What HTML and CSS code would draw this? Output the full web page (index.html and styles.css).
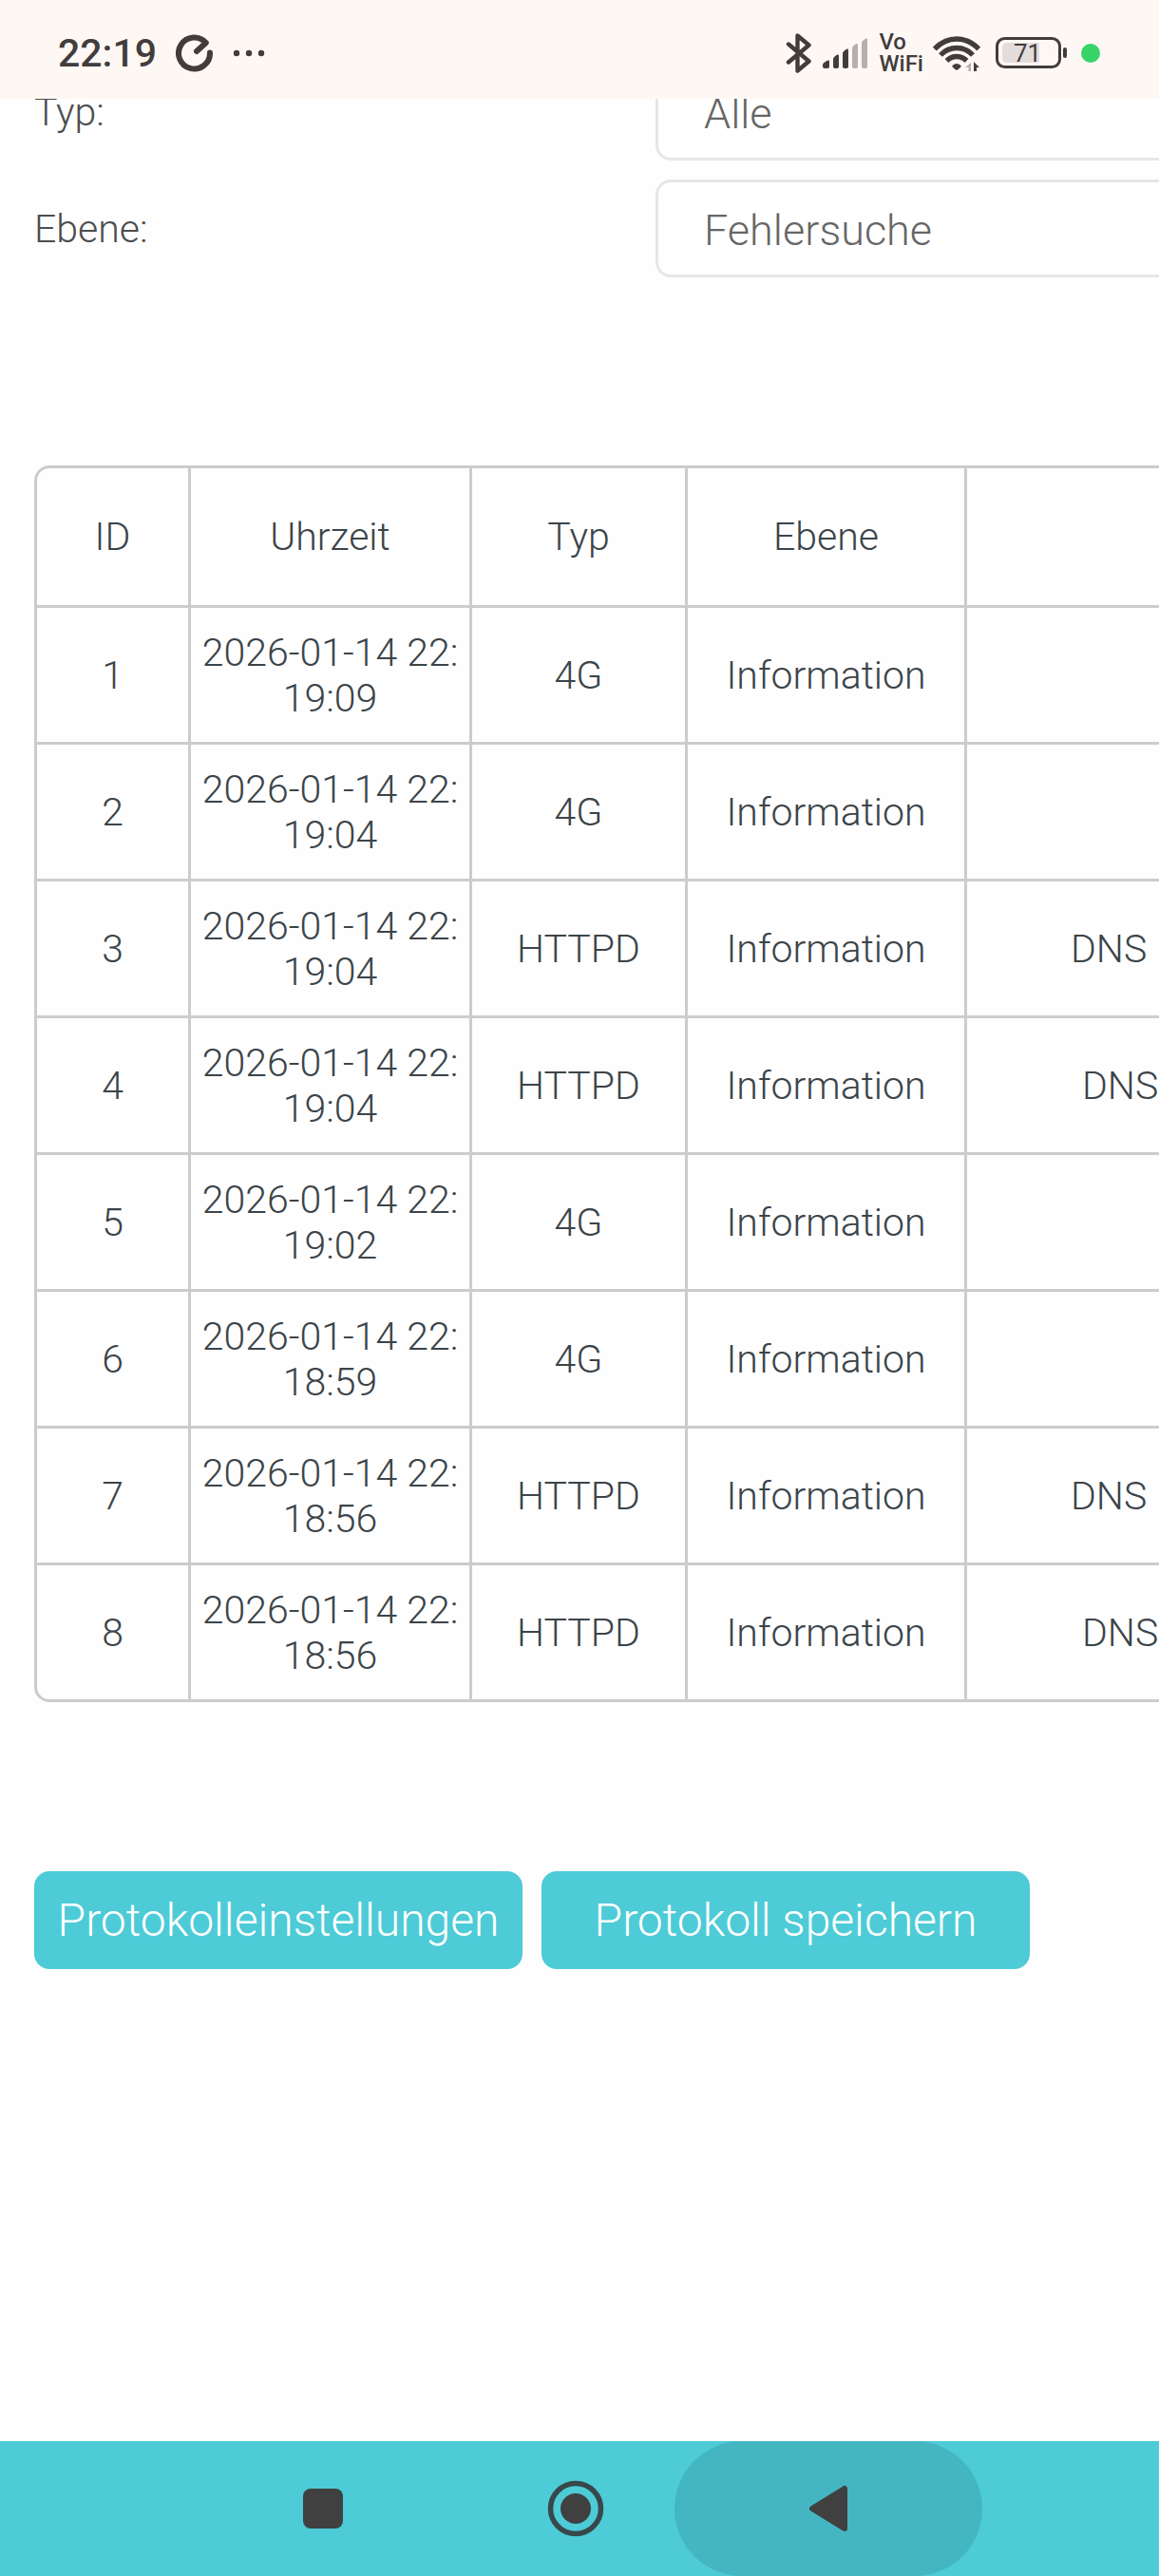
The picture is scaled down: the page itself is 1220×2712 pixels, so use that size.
FILE: index.html
```html
<!DOCTYPE html>
<html lang="de">
<head>
  <meta charset="UTF-8">
  <meta name="viewport" content="width=device-width, initial-scale=1.0">
  <title>Systemprotokoll</title>
  <link rel="stylesheet" href="styles.css">
</head>
<body>
  <!-- Status bar -->
  <header class="status-bar">
    <div class="status-left">
      <span class="clock">22:19</span>
      <svg width="40" height="40" viewBox="0 0 40 40" fill="none" stroke="#423d3c" stroke-width="6" stroke-linecap="round" stroke-linejoin="round" aria-hidden="true">
        <path d="M36 19.5A16.5 16.5 0 1 1 31.8 9L22 18"/>
      </svg>
      <svg width="34" height="8" viewBox="0 0 34 8" fill="#423d3c" aria-hidden="true">
        <circle cx="4" cy="4" r="3.2"/>
        <circle cx="17" cy="4" r="3.2"/>
        <circle cx="30" cy="4" r="3.2"/>
      </svg>
    </div>
    <div class="status-right">
      <svg width="28" height="42" viewBox="0 0 28 42" fill="none" stroke="#423d3c" stroke-width="4.4" stroke-linecap="round" stroke-linejoin="round" aria-hidden="true">
        <path d="M3 11.5L24.5 29.5L12.5 39.5V2.5L24.5 12.5L3 30.5"/>
      </svg>
      <svg width="50" height="32" viewBox="0 0 50 32" aria-hidden="true">
        <g fill="#423d3c">
          <path d="M1 28q0-2 5.500-4.500q1.500-.5 1.500 1v5.500q0 2-2 2h-3q-2 0-2-2z"/>
          <path d="M12 22q0-2 4.500-4.500q1.500-.5 1.500 1v11.500q0 2-2 2h-2q-2 0-2-2z"/>
          <path d="M22 16q0-2 4.500-4.500q1.500-.5 1.500 1v17.500q0 2-2 2h-2q-2 0-2-2z"/>
        </g>
        <g fill="#b5afad">
          <path d="M32 10.500q0-2 4.500-4.500q1.500-.5 1.500 1v23q0 2-2 2h-2q-2 0-2-2z"/>
          <path d="M42 5q0-2 4.500-4.500q1.500-.5 1.500 1v28.500q0 2-2 2h-2q-2 0-2-2z"/>
        </g>
      </svg>
      <span class="vowifi">Vo<br>WiFi</span>
      <svg width="50" height="38" viewBox="0 0 50 38" aria-hidden="true">
        <g fill="none" stroke="#423d3c" stroke-width="5.4">
          <path d="M1.800 14.500Q12 4 25 4T48.200 14.500"/>
          <path d="M8 21Q15 13.500 25 13.500T42 21"/>
          <path d="M14.500 27Q19 22.500 25 22.500T35.500 27"/>
        </g>
        <path fill="#423d3c" d="M20.500 32Q25 28 29.500 32Q30 33 29 34L26 36.500Q25 37.200 24 36.500L21 34Q20 33 20.500 32z"/>
        <path fill="#b5afad" d="M40 29V38H37.500V34H34z"/>
        <path fill="#423d3c" d="M43 38V28L49 34H46V38z"/>
      </svg>
      <span class="battery">
        <svg width="76" height="34" viewBox="0 0 76 34" aria-hidden="true">
          <rect x="1.500" y="1.500" width="66" height="30" rx="8" fill="none" stroke="#423d3c" stroke-width="3"/>
          <path fill="#e3dedc" d="M12 6H46V27H12q-5 0-5-5V11q0-5 5-5z"/>
          <rect x="71" y="11" width="4" height="11" rx="2" fill="#423d3c"/>
        </svg>
        <span class="battery-level">71</span>
      </span>
      <span class="privacy-dot"></span>
    </div>
  </header>

  <!-- Log page, scrolled under the status bar -->
  <main class="content">
    <form class="filters">
      <label for="type">Typ:</label>
      <select id="type" name="type">
        <option>Alle</option>
      </select>
      <label for="level">Ebene:</label>
      <select id="level" name="level">
        <option>Fehlersuche</option>
      </select>
    </form>

    <div class="table-box">
      <table class="log">
        <colgroup>
          <col class="col-id">
          <col class="col-time">
          <col class="col-type">
          <col class="col-level">
          <col>
        </colgroup>
        <thead>
          <tr><th>ID</th><th>Uhrzeit</th><th>Typ</th><th>Ebene</th><th></th></tr>
        </thead>
        <tbody>
          <tr><td>1</td><td>2026-01-14 22:<br>19:09</td><td>4G</td><td>Information</td><td></td></tr>
          <tr><td>2</td><td>2026-01-14 22:<br>19:04</td><td>4G</td><td>Information</td><td></td></tr>
          <tr><td>3</td><td>2026-01-14 22:<br>19:04</td><td>HTTPD</td><td>Information</td><td class="message">DNS</td></tr>
          <tr><td>4</td><td>2026-01-14 22:<br>19:04</td><td>HTTPD</td><td>Information</td><td class="message short">DNS</td></tr>
          <tr><td>5</td><td>2026-01-14 22:<br>19:02</td><td>4G</td><td>Information</td><td></td></tr>
          <tr><td>6</td><td>2026-01-14 22:<br>18:59</td><td>4G</td><td>Information</td><td></td></tr>
          <tr><td>7</td><td>2026-01-14 22:<br>18:56</td><td>HTTPD</td><td>Information</td><td class="message">DNS</td></tr>
          <tr><td>8</td><td>2026-01-14 22:<br>18:56</td><td>HTTPD</td><td>Information</td><td class="message short">DNS</td></tr>
        </tbody>
      </table>
    </div>

    <div class="actions">
      <button type="button">Protokolleinstellungen</button>
      <button type="button">Protokoll speichern</button>
    </div>
  </main>

  <!-- Navigation bar -->
  <nav class="nav-bar">
    <button type="button" aria-label="Übersicht">
      <svg width="42" height="42" viewBox="0 0 42 42"><rect width="42" height="42" rx="8" fill="#404040"/></svg>
    </button>
    <button type="button" aria-label="Startseite">
      <svg width="60" height="60" viewBox="0 0 60 60">
        <circle cx="30" cy="30" r="26.500" fill="none" stroke="#38484a" stroke-width="5.500"/>
        <circle cx="30" cy="30" r="16" fill="#404040"/>
      </svg>
    </button>
    <button type="button" class="pressed" aria-label="Zurück">
      <svg width="40" height="50" viewBox="0 0 40 50"><path d="M3 25L37 4V46z" fill="#404040" stroke="#404040" stroke-width="6" stroke-linejoin="round"/></svg>
    </button>
  </nav>
</body>
</html>
```

FILE: styles.css
```css
/* General Styles */
* {
  box-sizing: border-box;
}

body {
  margin: 0;
  min-height: 100vh;
  display: flex;
  flex-direction: column;
  overflow-x: hidden;
  font-family: Roboto, sans-serif;
  font-size: 41px;
  font-weight: 300;
  background-color: #fefefe;
  color: #3b4449;
}

svg {
  display: block;
}

button {
  border: none;
  font-family: inherit;
  font-weight: 300;
  cursor: pointer;
}

/* Status bar */
.status-bar {
  position: relative;
  z-index: 1;
  display: flex;
  justify-content: space-between;
  height: 104px;
  padding: 8px 62px 0 61px;
  background-color: #fef8f5;
  color: #423d3c;
}

.status-left,
.status-right {
  display: flex;
  align-items: center;
}

.status-left {
  gap: 20px;
}

.status-right {
  gap: 10px;
}

.clock {
  font-weight: 500;
}

.vowifi {
  font-size: 24px;
  font-weight: 500;
  line-height: 23px;
}

.battery {
  position: relative;
  margin: 0 4px 0 6px;
}

.battery-level {
  position: absolute;
  top: 2px;
  left: 19px;
  font-size: 26px;
  font-weight: 400;
  line-height: 30px;
}

.privacy-dot {
  width: 20px;
  height: 20px;
  border-radius: 50%;
  background-color: #37d467;
}

/* Content */
.content {
  flex: 1;
  margin-top: -38px;
  padding-left: 36px;
}

.filters {
  display: grid;
  grid-template-columns: 654px 1fr;
  row-gap: 20px;
  align-items: center;
  color: #4d4d4d;
}

.filters select {
  appearance: none;
  width: 100%;
  height: 103px;
  padding: 4px 48px 0;
  border: 3px solid #e6e6e6;
  border-right: none;
  border-radius: 16px 0 0 16px;
  background-color: #fff;
  color: #666;
  font-family: inherit;
  font-size: 45px;
  font-weight: 300;
}

/* Log table */
.table-box {
  margin-top: 198px;
  border: 3px solid #ccc;
  border-right: none;
  border-radius: 16px 0 0 16px;
  overflow: hidden;
}

.log {
  width: 100%;
  table-layout: fixed;
  border-collapse: separate;
  border-spacing: 0;
  line-height: 48px;
  text-align: center;
}

.col-id {
  width: 159px;
}

.col-time {
  width: 296px;
}

.col-type {
  width: 227px;
}

.col-level {
  width: 294px;
}

.log th,
.log td {
  height: 144px;
  padding: 0;
  font-weight: 300;
  white-space: nowrap;
}

.log td {
  border-top: 3px solid #ccc;
}

.log th + th,
.log td + td {
  border-left: 3px solid #ccc;
}

.log .message {
  padding-left: 109px;
  text-align: left;
}

.log .short {
  padding-left: 121px;
}

/* Buttons */
.actions {
  display: flex;
  gap: 20px;
  margin-top: 178px;
}

.actions button {
  width: 514px;
  height: 103px;
  padding: 0;
  border-radius: 16px;
  background-color: #4dcbd7;
  color: #fff;
  font-size: 48px;
}

/* Navigation bar */
.nav-bar {
  display: flex;
  justify-content: center;
  height: 142px;
  padding-right: 8px;
  background-color: #4dcbd7;
}

.nav-bar button {
  position: relative;
  display: flex;
  justify-content: center;
  align-items: center;
  width: 266px;
  padding: 0;
  background: none;
}

.nav-bar svg {
  position: relative;
}

.pressed::before {
  content: "";
  position: absolute;
  inset: 0 -29px;
  border-radius: 71px;
  background-color: #44b6c1;
}
```
